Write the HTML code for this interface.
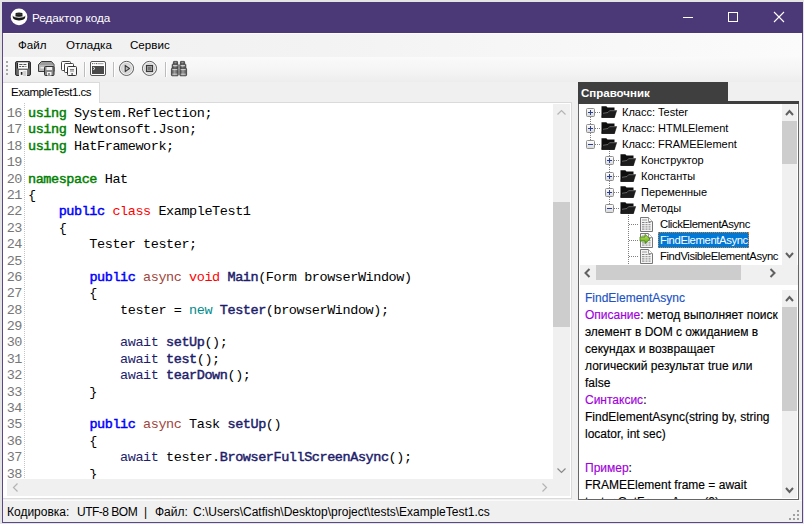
<!DOCTYPE html>
<html><head><meta charset="utf-8">
<style>
*{margin:0;padding:0;box-sizing:border-box}
html,body{width:804px;height:524px;overflow:hidden;background:#e4e4e4;font-family:"Liberation Sans",sans-serif}
.a{position:absolute}
.t{position:absolute;white-space:pre;line-height:1}
svg{position:absolute;overflow:visible}
#win{left:2px;top:2px;width:801px;height:521px;background:#f0f0f0;border:1px solid #5a4989;border-top:0}
#title{left:2px;top:2px;width:801px;height:31px;background:#4b3877}
#menu{left:3px;top:33px;width:799px;height:24px;background:linear-gradient(to right,#f0f0f0,#f3f3f3 40%,#fbfbfb);border-top:1px solid #fcfcfc}
#tool{left:3px;top:57px;width:799px;height:25px;background:linear-gradient(#fafafa,#f4f4f4 60%,#ededed)}
.ln,.cl{position:absolute;white-space:pre;font-family:"Liberation Mono",monospace;font-size:13.5px;line-height:16px;height:16px}
.ln{left:4px;width:18px;text-align:right;color:#777;letter-spacing:-0.43px}
.cl{left:28px;color:#000;letter-spacing:-0.43px}
.tr{position:absolute;white-space:pre;font-size:11px;line-height:16px;height:16px;color:#000}
.hl{position:absolute;left:6px;white-space:pre;font-size:12px;line-height:17px;height:17px;color:#000;-webkit-text-stroke:0.15px currentColor}
.sb{position:absolute;background:#f0f0f0}
.th{position:absolute;background:#cdcdcd}
.st{position:absolute;white-space:pre;font-size:12px;line-height:16px;color:#000;top:504px}
</style></head><body>
<div id="win" class="a"></div>
<div id="title" class="a"></div>

<svg style="left:0;top:0" width="40" height="33">
<circle cx="19" cy="16.9" r="8.3" fill="#fff"/>
<path d="M15.4 17.4 L15.6 13.1 Q19 11.9 22.4 13.1 L22.6 17.4 Z" fill="#1c1c1c"/>
<path d="M16.4 14.4 Q19 13.6 21.6 14.4" stroke="#4a4a4a" stroke-width=".7" fill="none"/>
<path d="M14.4 16.2 Q19 18.4 23.6 16.2" stroke="#c6c6c6" stroke-width="1.2" fill="none"/>
<path d="M12.6 15.6 Q12.4 20.6 19 20.5 Q25.6 20.6 25.4 15.6 Q24.2 18 19 18.1 Q13.8 18 12.6 15.6 Z" fill="#151515"/>
</svg>
<div class="t" style="left:32px;top:12px;font-size:11.7px;color:#fff">Редактор кода</div>
<div class="a" style="left:683px;top:17px;width:10px;height:1px;background:#fff"></div>
<div class="a" style="left:728px;top:12px;width:10px;height:10px;border:1px solid #fff"></div>
<svg style="left:773px;top:11px" width="12" height="12"><path d="M1 1L11 11M11 1L1 11" stroke="#fff" stroke-width="1.1"/></svg>

<div id="menu" class="a"></div>
<div class="t" style="left:18px;top:39px;font-size:11.6px;color:#000">Файл</div>
<div class="t" style="left:66px;top:39px;font-size:11.6px;color:#000">Отладка</div>
<div class="t" style="left:130px;top:39px;font-size:11.6px;color:#000">Сервис</div>

<div id="tool" class="a"></div>
<div class="a" style="left:6px;top:61px;width:2px;height:2px;background:#a8a8a8"></div><div class="a" style="left:6px;top:65px;width:2px;height:2px;background:#a8a8a8"></div><div class="a" style="left:6px;top:69px;width:2px;height:2px;background:#a8a8a8"></div><div class="a" style="left:6px;top:73px;width:2px;height:2px;background:#a8a8a8"></div><div class="a" style="left:84px;top:62px;width:1px;height:15px;background:#bcbcbc"></div><div class="a" style="left:85px;top:62px;width:1px;height:15px;background:#fff"></div><div class="a" style="left:113px;top:62px;width:1px;height:15px;background:#bcbcbc"></div><div class="a" style="left:114px;top:62px;width:1px;height:15px;background:#fff"></div><div class="a" style="left:165px;top:62px;width:1px;height:15px;background:#bcbcbc"></div><div class="a" style="left:166px;top:62px;width:1px;height:15px;background:#fff"></div>
<svg style="left:0;top:0" width="200" height="83">
<defs>
<linearGradient id="gb" x1="0" x2="1"><stop offset="0" stop-color="#5a5a5a"/><stop offset=".5" stop-color="#9a9a9a"/><stop offset="1" stop-color="#5a5a5a"/></linearGradient>
<radialGradient id="gc"><stop offset="0" stop-color="#f4f4f4"/><stop offset="1" stop-color="#c4c4c4"/></radialGradient>
</defs>
<!-- save -->
<rect x="15.5" y="61.5" width="15" height="14" rx="1.5" fill="url(#gb)" stroke="#2e2e2e"/>
<rect x="17.6" y="62" width="11" height="7" rx=".8" fill="#fafafa" stroke="#3a3a3a" stroke-width=".6"/>
<path d="M17.5 63v5.5M28.7 63v5.5" stroke="#222" stroke-width="1"/>
<path d="M19.2 64.5h3.3M23.4 64.5h3M19.2 66.5h1.8M21.8 66.5h2.6M25.4 66.5h1" stroke="#444" stroke-width=".9"/>
<rect x="19" y="70" width="8" height="6" fill="#f4f4f4"/>
<rect x="23.2" y="71" width="3" height="5" fill="#cfcfcf"/>
<rect x="20.8" y="72" width="1.6" height="2.8" fill="#1e1e1e"/>
<!-- save as -->
<path d="M41.5 61.5h10l2.5 3v7h-15.5v-7z" fill="#9c9c9c" stroke="#3a3a3a"/>
<rect x="39" y="65" width="14.5" height="6" fill="#b8b8b8"/>
<rect x="40.5" y="67" width="4" height="1.5" fill="#eee"/>
<rect x="44.5" y="66.5" width="9.5" height="9" rx="1" fill="#888" stroke="#2e2e2e"/>
<rect x="46.5" y="67" width="5.5" height="3" fill="#eee"/>
<rect x="47" y="72" width="4.5" height="3.5" fill="#f4f4f4"/>
<rect x="48.5" y="73" width="1" height="2" fill="#333"/>
<!-- save all -->
<rect x="61.5" y="61.5" width="9" height="9" rx="1" fill="#fff" stroke="#444"/>
<rect x="64.5" y="63.5" width="9" height="9" rx="1" fill="#fff" stroke="#444"/>
<rect x="67.5" y="66.5" width="9" height="9" rx="1" fill="#f6f6f6" stroke="#333"/>
<path d="M70 69.5h4M70 71h4" stroke="#777" stroke-width="0.9"/>
<rect x="71.5" y="73" width="1.2" height="2" fill="#444"/>
<!-- console -->
<rect x="90.5" y="61.5" width="15" height="14" rx="1.5" fill="#fff" stroke="#555"/>
<circle cx="92.7" cy="63.6" r=".6" fill="#333"/><circle cx="94.5" cy="63.6" r=".6" fill="#888"/><circle cx="96.3" cy="63.6" r=".6" fill="#333"/>
<rect x="97.5" y="63" width="6" height="1.2" fill="#aaa"/>
<rect x="92" y="66" width="12" height="8" fill="#4a4a4a"/>
<path d="M93.2 67.2l1.8 1.3-1.8 1.3" stroke="#fff" stroke-width=".9" fill="none"/>
<!-- play -->
<circle cx="126.5" cy="68.4" r="7" fill="url(#gc)" stroke="#555" stroke-width="1"/>
<circle cx="126.5" cy="68.4" r="6" fill="none" stroke="#fff" stroke-width=".8"/>
<path d="M125.2 65.4v6.2l4.3-3.1z" fill="#bdbdbd" stroke="#3a3a3a" stroke-width="1.1" stroke-linejoin="round"/>
<!-- stop -->
<circle cx="149.5" cy="68.4" r="7" fill="url(#gc)" stroke="#555" stroke-width="1"/>
<circle cx="149.5" cy="68.4" r="6" fill="none" stroke="#fff" stroke-width=".8"/>
<rect x="146.5" y="65.5" width="6" height="6" fill="#9a9a9a" stroke="#3a3a3a"/>
<rect x="148" y="67" width="3" height="3" fill="#777"/>
<!-- binoculars -->
<defs><linearGradient id="gn" x1="0" x2="1"><stop offset="0" stop-color="#4a4a4a"/><stop offset=".45" stop-color="#9a9a9a"/><stop offset="1" stop-color="#505050"/></linearGradient></defs>
<g fill="url(#gn)" stroke="#3a3a3a" stroke-width=".8">
<rect x="173.4" y="61.4" width="4.2" height="2.8" rx=".5"/>
<rect x="180.4" y="61.4" width="4.2" height="2.8" rx=".5"/>
<rect x="172.2" y="64.2" width="6" height="4" rx=".5"/>
<rect x="179.8" y="64.2" width="6" height="4" rx=".5"/>
<rect x="171.4" y="68.2" width="6.8" height="7.6" rx=".8"/>
<rect x="179.8" y="68.2" width="6.8" height="7.6" rx=".8"/>
</g>
<path d="M172.3 69.6h5M180.7 69.6h5M172.3 74.2h5M180.7 74.2h5M173 65.6h4.5M180.5 65.6h4.5" stroke="#e6e6e6" stroke-width=".8"/>
<rect x="178.2" y="66" width="1.6" height="5" fill="#888"/>
</svg>


<!-- tab strip -->
<div class="a" style="left:3px;top:102px;width:569px;height:1px;background:#dadada"></div>
<div class="a" style="left:3px;top:82px;width:97px;height:21px;background:#fff;border:1px solid #dadada;border-left:0;border-bottom:0"></div>
<div class="t" style="left:11px;top:87px;font-size:11.5px;letter-spacing:-0.45px;color:#000">ExampleTest1.cs</div>

<!-- editor -->
<div class="a" style="left:3px;top:103px;width:569px;height:396px;background:#fff;border-right:1px solid #dadada;border-bottom:1px solid #dadada"></div>
<div class="a" style="left:24px;top:103px;width:1px;height:376px;background:repeating-linear-gradient(#c4c4c4 0 1px,transparent 1px 2px)"></div>
<div class="ln" style="top:106px">16</div>
<div class="cl" style="top:106px"><span style="color:#008000;-webkit-text-stroke:0.45px #008000">using</span> System.Reflection;</div>
<div class="ln" style="top:122px">17</div>
<div class="cl" style="top:122px"><span style="color:#008000;-webkit-text-stroke:0.45px #008000">using</span> Newtonsoft.Json;</div>
<div class="ln" style="top:139px">18</div>
<div class="cl" style="top:139px"><span style="color:#008000;-webkit-text-stroke:0.45px #008000">using</span> HatFramework;</div>
<div class="ln" style="top:155px">19</div>
<div class="ln" style="top:172px">20</div>
<div class="cl" style="top:172px"><span style="color:#008000;-webkit-text-stroke:0.45px #008000">namespace</span> Hat</div>
<div class="ln" style="top:188px">21</div>
<div class="cl" style="top:188px">{</div>
<div class="ln" style="top:204px">22</div>
<div class="cl" style="top:204px">    <span style="color:#0000ff;-webkit-text-stroke:0.45px #0000ff">public</span> <span style="color:#ff0000">class</span> ExampleTest1</div>
<div class="ln" style="top:221px">23</div>
<div class="cl" style="top:221px">    {</div>
<div class="ln" style="top:237px">24</div>
<div class="cl" style="top:237px">        Tester tester;</div>
<div class="ln" style="top:254px">25</div>
<div class="ln" style="top:270px">26</div>
<div class="cl" style="top:270px">        <span style="color:#0000ff;-webkit-text-stroke:0.45px #0000ff">public</span> <span style="color:#a0463c">async</span> <span style="color:#ff0000">void</span> <span style="color:#1d1d6b;-webkit-text-stroke:0.45px #1d1d6b">Main</span>(Form browserWindow)</div>
<div class="ln" style="top:286px">27</div>
<div class="cl" style="top:286px">        {</div>
<div class="ln" style="top:303px">28</div>
<div class="cl" style="top:303px">            tester = <span style="color:#008b8b">new</span> <span style="color:#1d1d6b;-webkit-text-stroke:0.45px #1d1d6b">Tester</span>(browserWindow);</div>
<div class="ln" style="top:319px">29</div>
<div class="ln" style="top:335px">30</div>
<div class="cl" style="top:335px">            <span style="color:#1d1d6b">await</span> <span style="color:#1d1d6b;-webkit-text-stroke:0.45px #1d1d6b">setUp</span>();</div>
<div class="ln" style="top:352px">31</div>
<div class="cl" style="top:352px">            <span style="color:#1d1d6b">await</span> <span style="color:#1d1d6b;-webkit-text-stroke:0.45px #1d1d6b">test</span>();</div>
<div class="ln" style="top:368px">32</div>
<div class="cl" style="top:368px">            <span style="color:#1d1d6b">await</span> <span style="color:#1d1d6b;-webkit-text-stroke:0.45px #1d1d6b">tearDown</span>();</div>
<div class="ln" style="top:385px">33</div>
<div class="cl" style="top:385px">        }</div>
<div class="ln" style="top:401px">34</div>
<div class="ln" style="top:417px">35</div>
<div class="cl" style="top:417px">        <span style="color:#0000ff;-webkit-text-stroke:0.45px #0000ff">public</span> <span style="color:#a0463c">async</span> Task <span style="color:#1d1d6b;-webkit-text-stroke:0.45px #1d1d6b">setUp</span>()</div>
<div class="ln" style="top:434px">36</div>
<div class="cl" style="top:434px">        {</div>
<div class="ln" style="top:450px">37</div>
<div class="cl" style="top:450px">            <span style="color:#1d1d6b">await</span> tester.<span style="color:#1d1d6b;-webkit-text-stroke:0.45px #1d1d6b">BrowserFullScreenAsync</span>();</div>
<div class="ln" style="top:467px">38</div>
<div class="cl" style="top:467px">        }</div>

<div class="sb" style="left:553px;top:104px;width:17px;height:375px"></div>
<div class="th" style="left:553px;top:202px;width:17px;height:125px"></div>
<svg style="left:553px;top:104px" width="17" height="17"><path d="M4.5 10.5l4-4 4 4" stroke="#b4b4b4" stroke-width="1.2" fill="none"/></svg>
<svg style="left:553px;top:462px" width="17" height="17"><path d="M4.5 6.5l4 4 4-4" stroke="#8a8a8a" stroke-width="1.2" fill="none"/></svg>
<div class="sb" style="left:7px;top:479px;width:563px;height:17px"></div>
<svg style="left:7px;top:479px" width="17" height="17"><path d="M10.5 4.5l-4 4 4 4" stroke="#b4b4b4" stroke-width="1.2" fill="none"/></svg>
<svg style="left:536px;top:479px" width="17" height="17"><path d="M6.5 4.5l4 4-4 4" stroke="#b4b4b4" stroke-width="1.2" fill="none"/></svg>


<!-- right panel -->
<div class="a" style="left:578px;top:82px;width:150px;height:20px;background:#3f3f3f"></div>
<div class="a" style="left:578px;top:101px;width:221px;height:3px;background:#3f3f3f"></div>
<div class="t" style="left:581px;top:88px;font-size:11.5px;font-weight:bold;color:#fff">Справочник</div>
<div class="a" style="left:578px;top:104px;width:221px;height:396px;background:#fff;border:1px solid #666;border-top:0"></div>
<div class="a" style="left:0;top:0;width:782px;height:265px;overflow:hidden"><svg style="left:0;top:0" width="800" height="300"><defs><linearGradient id="gx" x1="0" y1="0" x2="0" y2="1"><stop offset="0" stop-color="#fff"/><stop offset="1" stop-color="#d8d8d8"/></linearGradient><linearGradient id="ga" x1="0" y1="0" x2="0" y2="1"><stop offset="0" stop-color="#c8f060"/><stop offset="1" stop-color="#58a010"/></linearGradient></defs>
<path d="M590.5 117v24" stroke="#808080" stroke-width="1" stroke-dasharray="1 1"/>
<path d="M609.5 149v56" stroke="#808080" stroke-width="1" stroke-dasharray="1 1"/>
<path d="M628.5 213v52" stroke="#808080" stroke-width="1" stroke-dasharray="1 1"/>
<rect x="586.5" y="108.5" width="8" height="8" rx="1" fill="url(#gx)" stroke="#8f8f8f"/><path d="M588 112.5h5" stroke="#2a3f8f" stroke-width="1"/><path d="M590.5 110v5" stroke="#2a3f8f" stroke-width="1"/>
<path d="M595 112.5h6" stroke="#808080" stroke-width="1" stroke-dasharray="1 1"/>
<path d="M601.5 106.3h4.8l1.2 1.3h7v9.9h-13z" fill="#0e0e0e"/><path d="M602.8 113.4L608 112.6L609.6 110.6H616.6L614.4 117.5H601.8z" fill="#1c1c1c" stroke="#0a0a0a" stroke-width=".6"/><path d="M603 113.3L608 112.5L609.6 110.7H616.3" stroke="#7a7a7a" stroke-width=".8" fill="none"/>
<rect x="586.5" y="124.5" width="8" height="8" rx="1" fill="url(#gx)" stroke="#8f8f8f"/><path d="M588 128.5h5" stroke="#2a3f8f" stroke-width="1"/><path d="M590.5 126v5" stroke="#2a3f8f" stroke-width="1"/>
<path d="M595 128.5h6" stroke="#808080" stroke-width="1" stroke-dasharray="1 1"/>
<path d="M601.5 122.3h4.8l1.2 1.3h7v9.9h-13z" fill="#0e0e0e"/><path d="M602.8 129.4L608 128.6L609.6 126.6H616.6L614.4 133.5H601.8z" fill="#1c1c1c" stroke="#0a0a0a" stroke-width=".6"/><path d="M603 129.3L608 128.5L609.6 126.7H616.3" stroke="#7a7a7a" stroke-width=".8" fill="none"/>
<rect x="586.5" y="140.5" width="8" height="8" rx="1" fill="url(#gx)" stroke="#8f8f8f"/><path d="M588 144.5h5" stroke="#2a3f8f" stroke-width="1"/>
<path d="M595 144.5h6" stroke="#808080" stroke-width="1" stroke-dasharray="1 1"/>
<path d="M601.5 138.3h4.8l1.2 1.3h7v9.9h-13z" fill="#0e0e0e"/><path d="M602.8 145.4L608 144.6L609.6 142.6H616.6L614.4 149.5H601.8z" fill="#1c1c1c" stroke="#0a0a0a" stroke-width=".6"/><path d="M603 145.3L608 144.5L609.6 142.7H616.3" stroke="#7a7a7a" stroke-width=".8" fill="none"/>
<rect x="605.5" y="156.5" width="8" height="8" rx="1" fill="url(#gx)" stroke="#8f8f8f"/><path d="M607 160.5h5" stroke="#2a3f8f" stroke-width="1"/><path d="M609.5 158v5" stroke="#2a3f8f" stroke-width="1"/>
<path d="M614 160.5h6" stroke="#808080" stroke-width="1" stroke-dasharray="1 1"/>
<path d="M620.5 154.3h4.8l1.2 1.3h7v9.9h-13z" fill="#0e0e0e"/><path d="M621.8 161.4L627 160.6L628.6 158.6H635.6L633.4 165.5H620.8z" fill="#1c1c1c" stroke="#0a0a0a" stroke-width=".6"/><path d="M622 161.3L627 160.5L628.6 158.7H635.3" stroke="#7a7a7a" stroke-width=".8" fill="none"/>
<rect x="605.5" y="172.5" width="8" height="8" rx="1" fill="url(#gx)" stroke="#8f8f8f"/><path d="M607 176.5h5" stroke="#2a3f8f" stroke-width="1"/><path d="M609.5 174v5" stroke="#2a3f8f" stroke-width="1"/>
<path d="M614 176.5h6" stroke="#808080" stroke-width="1" stroke-dasharray="1 1"/>
<path d="M620.5 170.3h4.8l1.2 1.3h7v9.9h-13z" fill="#0e0e0e"/><path d="M621.8 177.4L627 176.6L628.6 174.6H635.6L633.4 181.5H620.8z" fill="#1c1c1c" stroke="#0a0a0a" stroke-width=".6"/><path d="M622 177.3L627 176.5L628.6 174.7H635.3" stroke="#7a7a7a" stroke-width=".8" fill="none"/>
<rect x="605.5" y="188.5" width="8" height="8" rx="1" fill="url(#gx)" stroke="#8f8f8f"/><path d="M607 192.5h5" stroke="#2a3f8f" stroke-width="1"/><path d="M609.5 190v5" stroke="#2a3f8f" stroke-width="1"/>
<path d="M614 192.5h6" stroke="#808080" stroke-width="1" stroke-dasharray="1 1"/>
<path d="M620.5 186.3h4.8l1.2 1.3h7v9.9h-13z" fill="#0e0e0e"/><path d="M621.8 193.4L627 192.6L628.6 190.6H635.6L633.4 197.5H620.8z" fill="#1c1c1c" stroke="#0a0a0a" stroke-width=".6"/><path d="M622 193.3L627 192.5L628.6 190.7H635.3" stroke="#7a7a7a" stroke-width=".8" fill="none"/>
<rect x="605.5" y="204.5" width="8" height="8" rx="1" fill="url(#gx)" stroke="#8f8f8f"/><path d="M607 208.5h5" stroke="#2a3f8f" stroke-width="1"/>
<path d="M614 208.5h6" stroke="#808080" stroke-width="1" stroke-dasharray="1 1"/>
<path d="M620.5 202.3h4.8l1.2 1.3h7v9.9h-13z" fill="#0e0e0e"/><path d="M621.8 209.4L627 208.6L628.6 206.6H635.6L633.4 213.5H620.8z" fill="#1c1c1c" stroke="#0a0a0a" stroke-width=".6"/><path d="M622 209.3L627 208.5L628.6 206.7H635.3" stroke="#7a7a7a" stroke-width=".8" fill="none"/>
<path d="M629 224.5h10" stroke="#808080" stroke-width="1" stroke-dasharray="1 1"/>
<path d="M640.5 217.5h8l4 4v10h-12z" fill="#f4f4f4" stroke="#777"/><path d="M648.5 217.5v4h4" fill="#fff" stroke="#999"/><rect x="642" y="219" width="5" height="2" fill="#c8c8c8"/><path d="M642 222.5h2.5M645.5 222.5h2M648.5 222.5h2" stroke="#666" stroke-width=".8"/><path d="M642 224.7h2.5M645.5 224.7h2M648.5 224.7h2" stroke="#666" stroke-width=".8"/><path d="M642 226.9h2.5M645.5 226.9h2M648.5 226.9h2" stroke="#666" stroke-width=".8"/><path d="M642 229.1h2.5M645.5 229.1h2M648.5 229.1h2" stroke="#666" stroke-width=".8"/>
<path d="M629 240.5h10" stroke="#808080" stroke-width="1" stroke-dasharray="1 1"/>
<path d="M640.5 233.5h8l4 4v10h-12z" fill="#f4f4f4" stroke="#777"/><path d="M648.5 233.5v4h4" fill="#fff" stroke="#999"/><rect x="642" y="235" width="5" height="2" fill="#c8c8c8"/><path d="M642 238.5h2.5M645.5 238.5h2M648.5 238.5h2" stroke="#666" stroke-width=".8"/><path d="M642 240.7h2.5M645.5 240.7h2M648.5 240.7h2" stroke="#666" stroke-width=".8"/><path d="M642 242.9h2.5M645.5 242.9h2M648.5 242.9h2" stroke="#666" stroke-width=".8"/><path d="M642 245.1h2.5M645.5 245.1h2M648.5 245.1h2" stroke="#666" stroke-width=".8"/>
<path d="M640 237h5v-2.6l5 4.6-5 4.6v-2.6h-5z" fill="url(#ga)" stroke="#3f7f0f" stroke-width=".8"/>
<path d="M629 256.5h10" stroke="#808080" stroke-width="1" stroke-dasharray="1 1"/>
<path d="M640.5 249.5h8l4 4v10h-12z" fill="#f4f4f4" stroke="#777"/><path d="M648.5 249.5v4h4" fill="#fff" stroke="#999"/><rect x="642" y="251" width="5" height="2" fill="#c8c8c8"/><path d="M642 254.5h2.5M645.5 254.5h2M648.5 254.5h2" stroke="#666" stroke-width=".8"/><path d="M642 256.7h2.5M645.5 256.7h2M648.5 256.7h2" stroke="#666" stroke-width=".8"/><path d="M642 258.9h2.5M645.5 258.9h2M648.5 258.9h2" stroke="#666" stroke-width=".8"/><path d="M642 261.1h2.5M645.5 261.1h2M648.5 261.1h2" stroke="#666" stroke-width=".8"/>
</svg>
<div class="tr" style="left:622px;top:104px">Класс: Tester</div>
<div class="tr" style="left:622px;top:120px">Класс: HTMLElement</div>
<div class="tr" style="left:622px;top:136px">Класс: FRAMEElement</div>
<div class="tr" style="left:641px;top:152px">Конструктор</div>
<div class="tr" style="left:641px;top:168px">Константы</div>
<div class="tr" style="left:641px;top:184px">Переменные</div>
<div class="tr" style="left:641px;top:200px">Методы</div>
<div class="tr" style="left:660px;top:216px;font-size:11.3px;letter-spacing:-0.4px">ClickElementAsync</div>
<div class="a" style="left:658px;top:232px;width:91px;height:16px;background:#0078d7;outline:1px dotted #e08020;outline-offset:-1px"></div>
<div class="tr" style="left:660px;top:232px;color:#fff;font-size:11.3px;letter-spacing:-0.4px">FindElementAsync</div>
<div class="tr" style="left:660px;top:248px;font-size:11.3px;letter-spacing:-0.4px">FindVisibleElementAsync</div></div>
<div class="sb" style="left:782px;top:104px;width:15px;height:161px"></div>
<div class="th" style="left:782px;top:121px;width:15px;height:43px"></div>
<svg style="left:782px;top:104px" width="16" height="17"><path d="M4 11l3.5-4 3.5 4" stroke="#606060" stroke-width="2" fill="none"/></svg>
<svg style="left:782px;top:247px" width="16" height="17"><path d="M4 6l3.5 4 3.5-4" stroke="#606060" stroke-width="2" fill="none"/></svg>
<div class="sb" style="left:580px;top:265px;width:218px;height:20px"></div>
<div class="th" style="left:596px;top:265px;width:145px;height:15px"></div>
<svg style="left:579px;top:265px" width="17" height="16"><path d="M10.5 4l-4 4 4 4" stroke="#606060" stroke-width="2" fill="none"/></svg>
<svg style="left:764px;top:265px" width="17" height="16"><path d="M6.5 4l4 4-4 4" stroke="#606060" stroke-width="2" fill="none"/></svg>

<div class="a" style="left:579px;top:285px;width:203px;height:214px;overflow:hidden"><div class="hl" style="top:5px"><span style="color:#2153c4">FindElementAsync</span></div>
<div class="hl" style="top:22px"><span style="color:#a000dc">Описание</span>: метод выполняет поиск</div>
<div class="hl" style="top:39px">элемент в DOM с ожиданием в</div>
<div class="hl" style="top:56px">секундах и возвращает</div>
<div class="hl" style="top:73px">логический результат true или</div>
<div class="hl" style="top:90px">false</div>
<div class="hl" style="top:107px"><span style="color:#a000dc">Синтаксис</span>:</div>
<div class="hl" style="top:124px">FindElementAsync(string by, string</div>
<div class="hl" style="top:141px">locator, int sec)</div>
<div class="hl" style="top:175px"><span style="color:#a000dc">Пример</span>:</div>
<div class="hl" style="top:192px">FRAMEElement frame = await</div>
<div class="hl" style="top:209px">tester.GetFrameAsync(0);</div></div>
<div class="sb" style="left:782px;top:290px;width:15px;height:208px"></div>
<div class="th" style="left:782px;top:307px;width:15px;height:104px"></div>
<svg style="left:782px;top:290px" width="16" height="17"><path d="M4 11l3.5-4 3.5 4" stroke="#606060" stroke-width="2" fill="none"/></svg>
<svg style="left:782px;top:482px" width="16" height="17"><path d="M4 6l3.5 4 3.5-4" stroke="#606060" stroke-width="2" fill="none"/></svg>


<!-- status -->
<div class="a" style="left:3px;top:500px;width:799px;height:1px;background:#fafafa"></div>

<div class="st" style="left:7px">Кодировка:</div>
<div class="st" style="left:77px;letter-spacing:-0.5px">UTF-8 BOM</div>
<div class="st" style="left:144px">|</div>
<div class="st" style="left:155px">Файл:</div>
<div class="st" style="left:193px">C:\Users\Catfish\Desktop\project\tests\ExampleTest1.cs</div>
<div class="a" style="left:797px;top:510px;width:2px;height:2px;background:#a0a0a0"></div><div class="a" style="left:793px;top:514px;width:2px;height:2px;background:#a0a0a0"></div><div class="a" style="left:797px;top:514px;width:2px;height:2px;background:#a0a0a0"></div><div class="a" style="left:789px;top:518px;width:2px;height:2px;background:#a0a0a0"></div><div class="a" style="left:793px;top:518px;width:2px;height:2px;background:#a0a0a0"></div><div class="a" style="left:797px;top:518px;width:2px;height:2px;background:#a0a0a0"></div>
</body></html>
